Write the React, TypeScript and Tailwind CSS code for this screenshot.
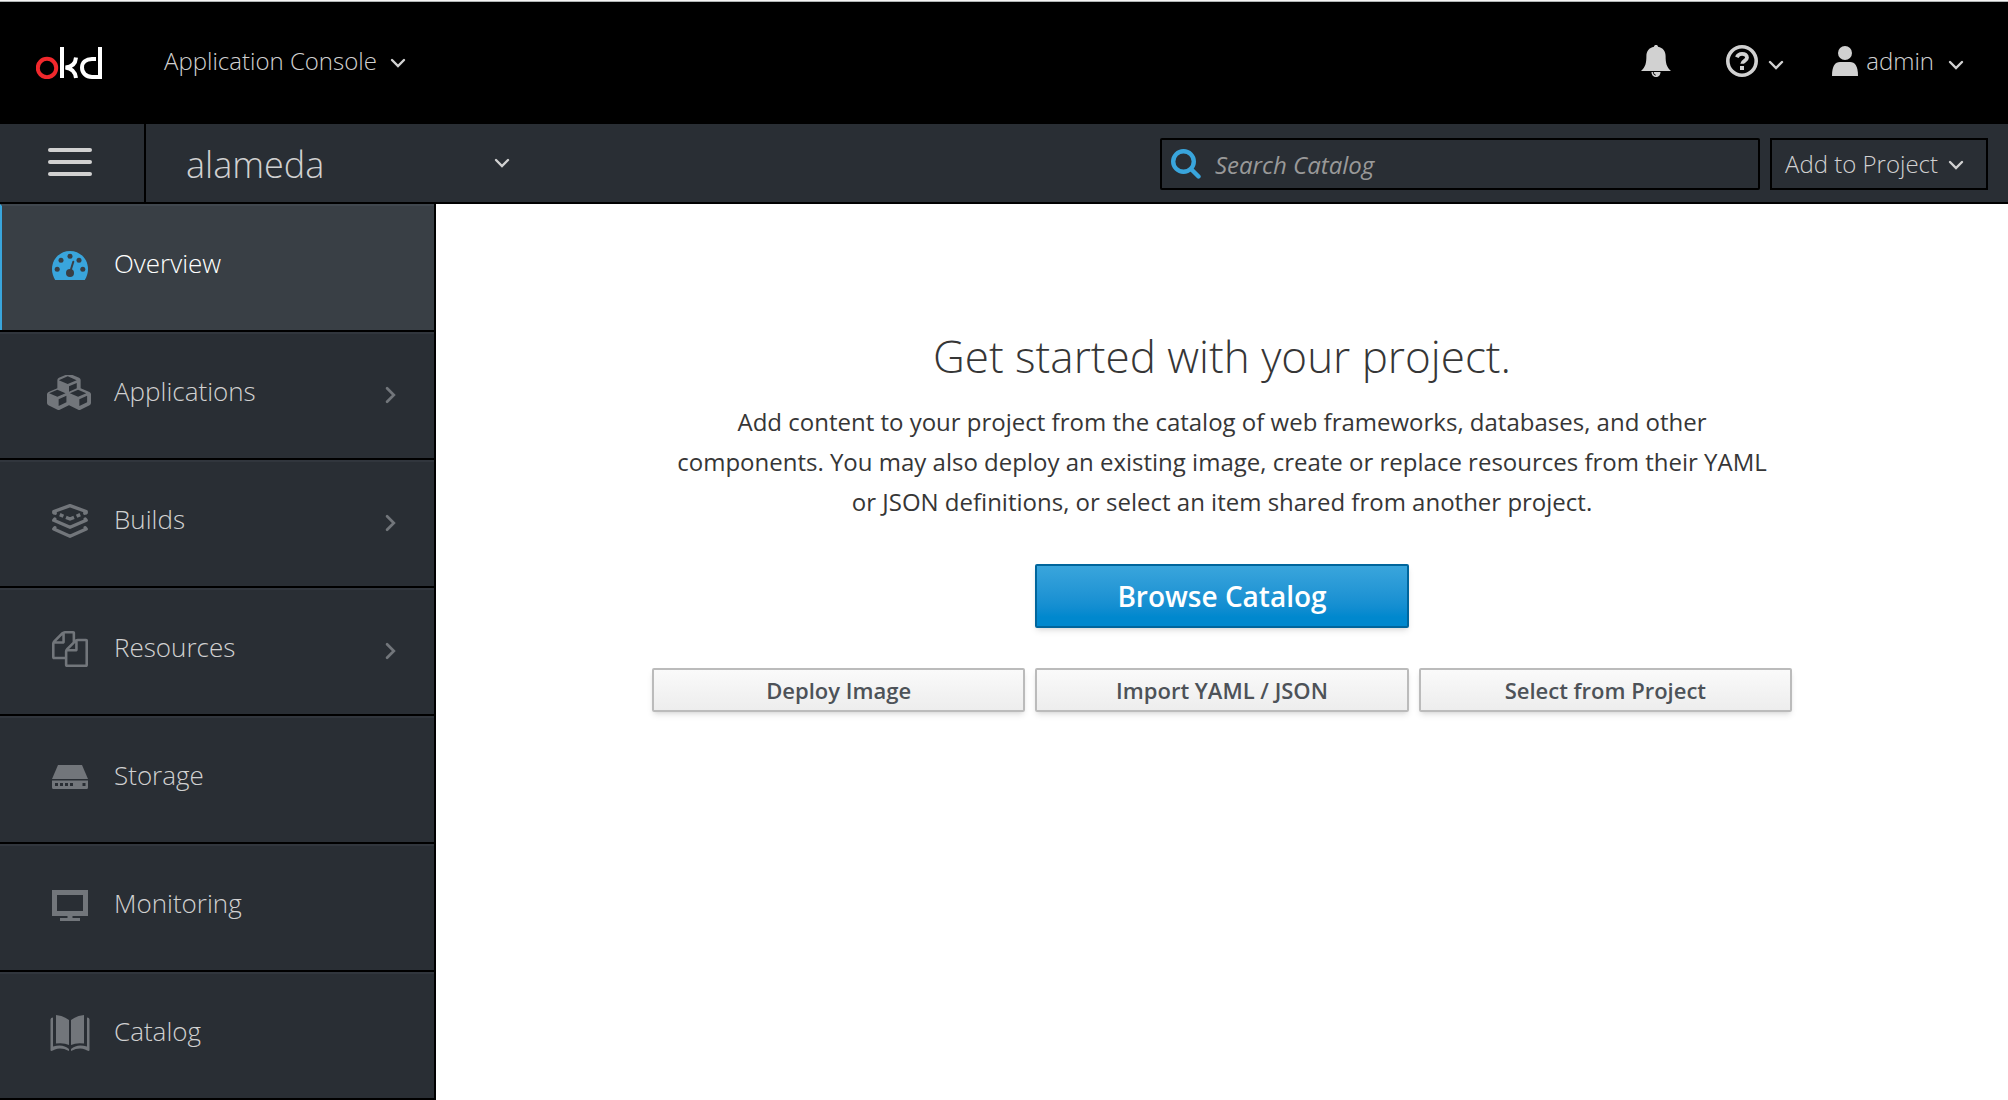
import { useState } from 'react';
import type { ReactNode } from 'react';

const Chevron = ({ dir = 'down', className = '' }: { dir?: 'down' | 'right'; className?: string }) => (
  <svg viewBox="0 0 16 16" className={className} fill="none" stroke="currentColor" strokeWidth="2.4" strokeLinecap="round" strokeLinejoin="miter" aria-hidden="true">
    {dir === 'down' ? <path d="M2 5l6 6 6-6" /> : <path d="M4.500 2l6 6-6 6" />}
  </svg>
);

const DashboardIcon = () => (
  <svg viewBox="0 0 36 29" className="w-9" aria-hidden="true">
    <path fill="currentColor" d="M18 0C8 0 0 8 0 18c0 4.300 1.200 7.700 3.200 11h29.600c2-3.300 3.200-6.700 3.200-11C36 8 28 0 18 0z" />
    <g fill="#393f45">
      <circle cx="18" cy="5.300" r="2.500" />
      <circle cx="9" cy="9.200" r="2.500" />
      <circle cx="27" cy="9.200" r="2.500" />
      <circle cx="5.200" cy="18.300" r="2.500" />
      <circle cx="30.800" cy="18.300" r="2.500" />
      <circle cx="18" cy="22" r="4" />
    </g>
    <path d="M18.300 20.500L21.300 10.700" stroke="#393f45" strokeWidth="2" strokeLinecap="round" />
  </svg>
);

const CubesIcon = () => (
  <svg viewBox="0 0 2176 1792" className="mr-0.5 w-11 shrink-0" fill="currentColor" aria-hidden="true">
    <path d="M576 1536l384-192v-314l-384 164v342zM512 1080l404-173-404-173-404 173zM1600 1536l384-192v-314l-384 164v342zM1536 1080l404-173-404-173-404 173zM1088 825l384-165v-266l-384 164v267zM1024 446l441-189-441-189-441 189zM2176 960v416q0 36-19 67t-52 47l-448 224q-25 14-57 14t-57-14l-448-224q-4-2-7-4-2 2-7 4l-448 224q-25 14-57 14t-57-14l-448-224q-33-16-52-47t-19-67v-416q0-38 21.500-70t56.500-48l434-186v-400q0-38 21.500-70t56.500-48l448-192q23-10 50-10t50 10l448 192q35 16 56.500 48t21.500 70v400l434 186q36 16 57 48t21 70z" />
  </svg>
);

const BuildsIcon = () => (
  <svg viewBox="0 0 36 36" className="w-9" fill="none" stroke="currentColor" strokeWidth="3.400" strokeLinejoin="round" strokeLinecap="round" aria-hidden="true">
    <path d="M3.200 10.200L1.800 9.800V8.500L18 2.700L34.200 8.500V9.800L32.800 10.200" />
    <path d="M7.800 11.600l3.600 1.600M14 14.400l4 1.600 4-1.600M24.600 13.200l3.600-1.600" strokeLinecap="butt" strokeWidth="3.400" />
    <path d="M2.800 16L1.800 17.300L18 24.200l16.200-6.900L33.200 16" />
    <path d="M2.800 24.700L1.800 26L18 33.200L34.200 26L33.200 24.700" />
  </svg>
);

const FilesIcon = () => (
  <svg viewBox="0 0 1792 1792" className="w-9" fill="currentColor" aria-hidden="true">
    <path d="M1696 384q40 0 68 28t28 68v1216q0 40-28 68t-68 28h-960q-40 0-68-28t-28-68v-288h-544q-40 0-68-28t-28-68v-672q0-40 20-88t48-76l408-408q28-28 76-48t88-20h416q40 0 68 28t28 68v328q68-40 128-40h416zm-544 213l-299 299h299v-299zm-640-384l-299 299h299v-299zm196 647l316-316v-416h-384v416q0 40-28 68t-68 28h-416v640h512v-256q0-40 20-88t48-76zm956 804v-1152h-384v416q0 40-28 68t-68 28h-416v640h896z" />
  </svg>
);

const StorageIcon = () => (
  <svg viewBox="0 0 36 24" className="w-9" fill="currentColor" aria-hidden="true">
    <path d="M6 0h24l6 14H0z" />
    <path fillRule="evenodd" d="M0 15.500h36v7q0 1.500-1.500 1.500h-33Q0 24 0 22.500zM3 18v3h3v-3zM8 18v3h3v-3zM13 18v3h3v-3zM18 18v3h3v-3zM30.500 18v3h3v-3z" />
  </svg>
);

const MonitorIcon = () => (
  <svg viewBox="0 0 36 31" className="w-9" fill="currentColor" aria-hidden="true">
    <path fillRule="evenodd" d="M0 0h36v26H20.500v2H28v3H8v-3h7.500v-2H0zM5 5v16h26V5z" />
  </svg>
);

const BookIcon = () => (
  <svg viewBox="0 0 40 36" className="w-10" fill="currentColor" aria-hidden="true">
    <path d="M6 0Q14 1 19 5v25Q14 27.500 6 28.500z" />
    <path d="M34 0Q26 1 21 5v25Q26 27.500 34 28.500z" />
    <path d="M.5 4.500Q.5 2.500 3 2.500V31.500Q13 28.500 19 34V36Q11 32 5 34.500Q.5 37 .5 35z" />
    <path d="M39.500 4.500Q39.500 2.500 37 2.500V31.500Q27 28.500 21 34V36Q29 32 35 34.500Q39.500 37 39.500 35z" />
  </svg>
);

const items: { label: string; icon: ReactNode; more?: boolean }[] = [
  { label: 'Overview', icon: <DashboardIcon /> },
  { label: 'Applications', icon: <CubesIcon />, more: true },
  { label: 'Builds', icon: <BuildsIcon />, more: true },
  { label: 'Resources', icon: <FilesIcon />, more: true },
  { label: 'Storage', icon: <StorageIcon /> },
  { label: 'Monitoring', icon: <MonitorIcon /> },
  { label: 'Catalog', icon: <BookIcon /> },
];

const Masthead = () => (
  <header className="flex h-[124px] items-center border-t border-[#f5f5f5] bg-black pr-11 pb-1 pl-9 shadow-[inset_0_1px_0_#b0b4b4]">
    <a href="#home" aria-label="okd" className="mt-1 block">
      <svg viewBox="0 0 66 32" className="h-8 w-[66px]" fill="none" strokeWidth="4" aria-hidden="true">
        <ellipse cx="11" cy="21" rx="9.200" ry="9.200" stroke="#f1282c" />
        <path d="M26 0v31" stroke="#fff" />
        <path d="M40 10.500C39.500 16.500 36 20 29.500 20.500C36 21.500 39.500 25.500 40 31" stroke="#fff" />
        <path d="M64 0v32M64 30h-8C50 30 46 26 46 20.500S50 12 56 12h4" stroke="#fff" />
      </svg>
    </a>
    <button className="ml-[62px] flex items-center gap-[13px]">
      Application Console
      <Chevron className="mt-1 w-4" />
    </button>
    <div className="ml-auto flex items-center">
      <button aria-label="Notifications" className="mr-[55px]">
        <svg viewBox="0 0 30 32" className="h-8 w-[30px]" fill="currentColor" aria-hidden="true">
          <path d="M15 0c1.200 0 2 .7 2 1.700C22 2.700 24.600 6 24.600 11C24.600 18 25.500 22 30 26H0C4.500 22 5.400 18 5.400 11C5.400 6 8 2.700 13 1.700C13 .7 13.800 0 15 0z" />
          <path d="M10.500 27h9c0 3-2 5-4.500 5s-4.500-2-4.500-5z" />
          <path d="M12.300 27q0 3 2.500 3.200" fill="none" stroke="#000" strokeWidth=".9" />
        </svg>
      </button>
      <button aria-label="Help" className="mr-12 flex items-center gap-[10px]">
        <svg viewBox="0 0 32 32" className="w-8" fill="none" stroke="currentColor" aria-hidden="true">
          <circle cx="16" cy="16" r="14.200" strokeWidth="3.600" />
          <path d="M10.800 12.200C12 9.600 13.800 8.800 16 8.800c3 0 5 1.500 5 3.900 0 3-4.800 3.200-4.800 6.100" strokeWidth="3.800" />
          <path d="M14 21h4v4h-4z" fill="currentColor" stroke="none" />
        </svg>
        <Chevron className="mt-2 w-4" />
      </button>
      <button className="flex items-center">
        <svg viewBox="0 0 26 30" className="w-[26px]" fill="currentColor" aria-hidden="true">
          <circle cx="13" cy="7" r="7" />
          <path d="M0 30C0 20 3 16 8 16h10c5 0 8 4 8 14z" />
        </svg>
        <span className="ml-2">admin</span>
        <Chevron className="mt-2 ml-[14px] w-4" />
      </button>
    </div>
  </header>
);

const ProjectBar = () => {
  const [query, setQuery] = useState('');
  return (
    <div className="flex h-20 border-b-2 border-black bg-[#292e34]">
      <button aria-label="Toggle navigation" className="flex w-[146px] flex-col items-start justify-center gap-2 border-r-2 border-black pb-0.5 pl-12">
        <span className="h-1 w-11 rounded-sm bg-current" />
        <span className="h-1 w-11 rounded-sm bg-current" />
        <span className="h-1 w-11 rounded-sm bg-current" />
      </button>
      <button className="flex w-[364px] items-center justify-between pl-10 text-4xl">
        <span className="pt-1">alameda</span>
        <Chevron className="w-4" />
      </button>
      <div className="ml-auto flex items-center gap-[10px] pt-0.5 pr-5">
        <div className="flex h-[52px] w-[600px] items-center rounded-xs border-2 border-black">
          <svg viewBox="0 0 30 30" className="ml-[9px] w-[30px] shrink-0" fill="none" stroke="#39a5dc" aria-hidden="true">
            <circle cx="12.500" cy="12.500" r="10.300" strokeWidth="4.400" />
            <path d="M20 20l7.500 7.500" strokeWidth="4.400" strokeLinecap="round" />
          </svg>
          <input
            aria-label="Search Catalog"
            placeholder="Search Catalog"
            value={query}
            onChange={(e) => setQuery(e.target.value)}
            className="ml-[14px] min-w-0 flex-1 bg-transparent pt-0.5 font-normal placeholder:text-[#999] placeholder:italic focus:outline-none"
          />
        </div>
        <button className="flex h-[52px] w-[218px] items-center gap-[10px] border-2 border-black pl-[13px]">
          Add to Project
          <Chevron className="mt-0.5 w-4" />
        </button>
      </div>
    </div>
  );
};

const Sidebar = () => (
  <nav className="w-[436px] shrink-0 border-r-2 border-black bg-[#292e34]">
    <ul>
      {items.map(({ label, icon, more }, i) => (
        <li key={label} className="h-32 border-b-2 border-black">
          <a
            href={'#' + label.toLowerCase()}
            className={
              i === 0
                ? 'flex h-full items-center border-t-2 border-l-2 border-t-[#40474e] border-l-[#39a5dc] bg-[#393f45] pr-[34px] pb-1.5 pl-[38px] text-white'
                : 'flex h-full items-center border-t-2 border-t-[#31363d] pr-[34px] pb-1.5 pl-10'
            }
          >
            <span className={i === 0 ? 'flex w-[60px] justify-center text-[#39a5dc]' : 'flex w-[60px] justify-center text-[#72767b]'}>{icon}</span>
            <span className="ml-[14px] pb-1 text-[26px]">{label}</span>
            {more && <Chevron dir="right" className="mt-1 ml-auto w-[18px] text-[#72767b]" />}
          </a>
        </li>
      ))}
    </ul>
  </nav>
);

const secondary = ['Deploy Image', 'Import YAML / JSON', 'Select from Project'];

const GetStarted = () => (
  <main className="flex-1 bg-white px-5 pt-32 text-[#363636]">
    <div className="mx-auto grid max-w-[1140px] grid-cols-3 gap-x-[10px] text-center">
      <h1 className="col-span-3 text-[44px] leading-12 font-light">Get started with your project.</h1>
      <p className="col-span-3 mt-[22px] px-5 text-2xl leading-10 font-normal">
        Add content to your project from the catalog of web frameworks, databases, and other components. You may also deploy an existing image, create or replace resources from their YAML or JSON definitions, or select an item shared from another project.
      </p>
      <button className="col-start-2 mt-[42px] h-16 rounded-xs border-2 border-[#00659c] bg-linear-to-b from-[#39a5dc] to-[#0088ce] to-85% text-[28px] font-semibold text-white shadow-md">Browse Catalog</button>
      <div className="col-span-3 mt-10 grid grid-cols-3 gap-[10px]">
        {secondary.map((s) => (
          <button key={s} className="h-11 rounded-xs border-2 border-[#bbb] bg-linear-to-b from-[#fafafa] to-[#ededed] text-[22px] font-semibold text-[#4d5258] shadow-md">
            {s}
          </button>
        ))}
      </div>
    </div>
  </main>
);

export default function App() {
  return (
    <div className="flex min-h-screen flex-col font-['Open_Sans',sans-serif] text-2xl leading-8 font-light text-[#d1d1d1]">
      <Masthead />
      <ProjectBar />
      <div className="flex flex-1">
        <Sidebar />
        <GetStarted />
      </div>
    </div>
  );
}
